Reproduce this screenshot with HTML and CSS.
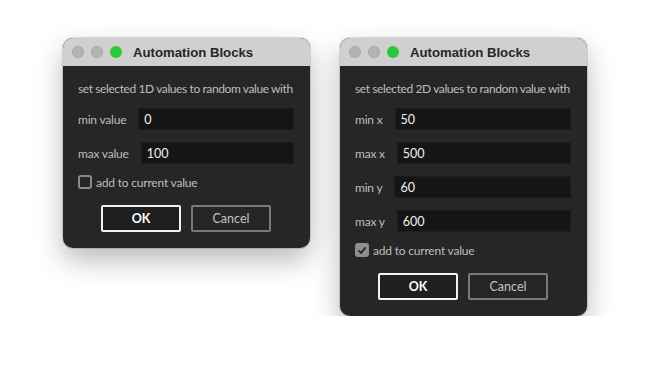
FILE: index.html
```html
<!DOCTYPE html>
<html lang="en">
<head>
    <meta charset="UTF-8">
    <title>Automation Blocks</title>
    <link rel="stylesheet" href="styles.css">
</head>
<body>
    <!-- 1D dialog -->
    <div class="window">
        <div class="titlebar">
            <span class="light grey"></span>
            <span class="light grey"></span>
            <span class="light green"></span>
            <span class="title">Automation Blocks</span>
        </div>
        <div class="content">
            <p class="desc">set selected 1D values to random value with</p>
            <div class="row"><label>min value</label><input type="text" value="0"></div>
            <div class="row"><label>max value</label><input type="text" value="100"></div>
            <div class="check-row">
                <span class="box"></span>
                <span>add to current value</span>
            </div>
            <div class="buttons">
                <button class="btn ok">OK</button>
                <button class="btn cancel">Cancel</button>
            </div>
        </div>
    </div>

    <!-- 2D dialog -->
    <div class="window">
        <div class="titlebar">
            <span class="light grey"></span>
            <span class="light grey"></span>
            <span class="light green"></span>
            <span class="title">Automation Blocks</span>
        </div>
        <div class="content">
            <p class="desc">set selected 2D values to random value with</p>
            <div class="row"><label>min x</label><input type="text" value="50"></div>
            <div class="row"><label>max x</label><input type="text" value="500"></div>
            <div class="row"><label>min y</label><input type="text" value="60"></div>
            <div class="row"><label>max y</label><input type="text" value="600"></div>
            <div class="check-row">
                <span class="box checked">
                    <svg width="11" height="11" viewBox="0 0 11 11"><path d="M2 5.8 L4.4 8.3 L9 2.6" fill="none" stroke="#1e1e1e" stroke-width="1.8" stroke-linecap="round" stroke-linejoin="round"/></svg>
                </span>
                <span>add to current value</span>
            </div>
            <div class="buttons">
                <button class="btn ok">OK</button>
                <button class="btn cancel">Cancel</button>
            </div>
        </div>
    </div>
</body>
</html>
```

FILE: styles.css
```css
body {
    margin: 0;
    padding: 38px 0 0 63px;
    background: #ffffff;
    display: flex;
    align-items: flex-start;
    gap: 30px;
    font-family: Lato, "Open Sans", sans-serif;
}

/* Window */
.window {
    width: 247px;
    border-radius: 10px;
    background: #262626;
    overflow: hidden;
    box-shadow: 0 12px 28px rgba(0, 0, 0, 0.28), 0 0 0 1px rgba(0, 0, 0, 0.12);
}

.titlebar {
    height: 28px;
    background: #d0d0d0;
    display: flex;
    align-items: center;
    padding-left: 9px;
    gap: 7px;
}

.light {
    width: 12px;
    height: 12px;
    border-radius: 50%;
}

.light.grey {
    background: #b3b3b3;
    box-shadow: inset 0 0 0 0.5px rgba(0, 0, 0, 0.12);
}

.light.green {
    background: #2bc83c;
}

.title {
    margin-left: 4px;
    font-family: "Liberation Sans", Arial, sans-serif;
    font-weight: bold;
    font-size: 13.2px;
    color: #262626;
}

/* Content */
.content {
    padding: 15px 16px 16px 15px;
    color: #bdbdbd;
    font-size: 12px;
    letter-spacing: -0.2px;
}

.desc {
    margin: 0 0 11px;
    line-height: 16px;
    white-space: nowrap;
    letter-spacing: -0.4px;
}

.row {
    display: flex;
    align-items: center;
    gap: 12px;
    margin-bottom: 12px;
}

.row label {
    white-space: nowrap;
}

.row input {
    flex: 1;
    min-width: 0;
    height: 22px;
    box-sizing: border-box;
    border: 1px solid #1c1c1c;
    border-radius: 2px;
    background: #151515;
    color: #f0f0f0;
    font-family: inherit;
    font-size: 12.5px;
    padding: 0 5px;
}

.check-row {
    display: flex;
    align-items: center;
    gap: 4px;
    height: 14px;
    margin-top: -1px;
}

.box {
    width: 14px;
    height: 14px;
    box-sizing: border-box;
    border: 2px solid #8a8a8a;
    border-radius: 3px;
    display: flex;
    align-items: center;
    justify-content: center;
}

.box.checked {
    background: #8e8e8e;
    border-color: #8e8e8e;
}

.buttons {
    display: flex;
    justify-content: center;
    gap: 10px;
    margin-top: 16px;
}

.btn {
    width: 80px;
    height: 27px;
    background: #1f1f1f;
    border-radius: 2px;
    font-family: inherit;
    font-size: 12.5px;
}

.btn.ok {
    border: 2px solid #f2f2f2;
    color: #ffffff;
    font-weight: bold;
}

.btn.cancel {
    border: 2px solid #7a7a7a;
    color: #c4c4c4;
    background: #262626;
}
```
